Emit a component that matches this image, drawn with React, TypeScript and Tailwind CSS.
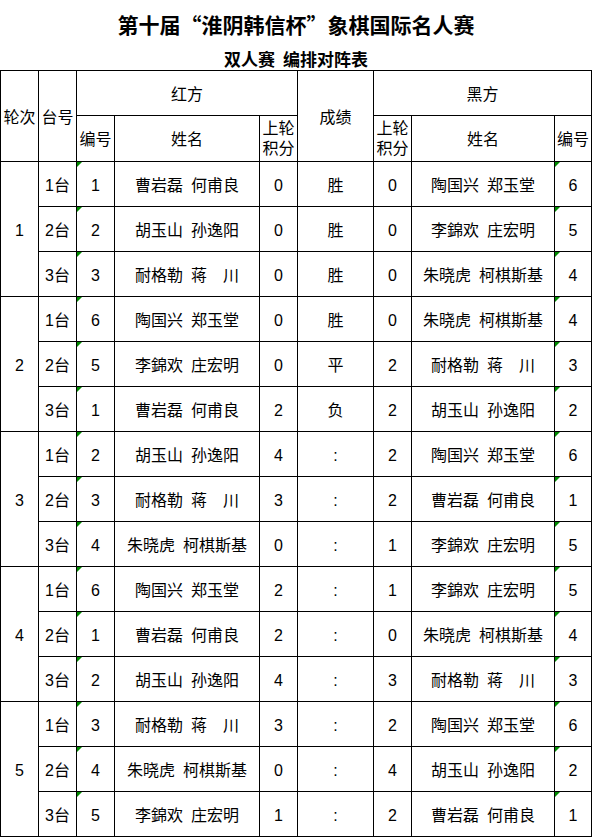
import React from "react";

type Row = [string, string, string, string, string, string, string];

const rounds: Row[][] = [
  [
    ["1", "曹岩磊 何甫良", "0", "胜", "0", "陶国兴 郑玉堂", "6"],
    ["2", "胡玉山 孙逸阳", "0", "胜", "0", "李錦欢 庄宏明", "5"],
    ["3", "耐格勒 蒋　川", "0", "胜", "0", "朱晓虎 柯棋斯基", "4"],
  ],
  [
    ["6", "陶国兴 郑玉堂", "0", "胜", "0", "朱晓虎 柯棋斯基", "4"],
    ["5", "李錦欢 庄宏明", "0", "平", "2", "耐格勒 蒋　川", "3"],
    ["1", "曹岩磊 何甫良", "2", "负", "2", "胡玉山 孙逸阳", "2"],
  ],
  [
    ["2", "胡玉山 孙逸阳", "4", ":", "2", "陶国兴 郑玉堂", "6"],
    ["3", "耐格勒 蒋　川", "3", ":", "2", "曹岩磊 何甫良", "1"],
    ["4", "朱晓虎 柯棋斯基", "0", ":", "1", "李錦欢 庄宏明", "5"],
  ],
  [
    ["6", "陶国兴 郑玉堂", "2", ":", "1", "李錦欢 庄宏明", "5"],
    ["1", "曹岩磊 何甫良", "2", ":", "0", "朱晓虎 柯棋斯基", "4"],
    ["2", "胡玉山 孙逸阳", "4", ":", "3", "耐格勒 蒋　川", "3"],
  ],
  [
    ["3", "耐格勒 蒋　川", "3", ":", "2", "陶国兴 郑玉堂", "6"],
    ["4", "朱晓虎 柯棋斯基", "0", ":", "4", "胡玉山 孙逸阳", "2"],
    ["5", "李錦欢 庄宏明", "1", ":", "2", "曹岩磊 何甫良", "1"],
  ],
];

const cell = "bg-white flex items-center justify-center text-[16px] text-black";
const dcell = cell + " pt-[3px]";

function Tri() {
  return (
    <span className="absolute top-0 left-0 w-0 h-0 border-t-[5px] border-r-[5px] border-t-[#008a00] border-r-transparent" />
  );
}

function Name({ v }: { v: string }) {
  const parts = v.split(" ");
  return (
    <div className={dcell + " gap-[8px] whitespace-pre"}>
      {parts.map((p, i) => (
        <span key={i}>{p}</span>
      ))}
    </div>
  );
}

export default function App() {
  return (
    <div
      className="w-[592px] bg-white text-black"
      style={{ fontFamily: '"Liberation Sans", "Noto Sans CJK SC", sans-serif' }}
    >
      <div className="h-[70px] flex flex-col items-center pt-[10px] font-['Noto_Sans_CJK_SC',sans-serif]">
        <div className="text-[21px] leading-[28px] font-bold">第十届“淮阴韩信杯”象棋国际名人赛</div>
        <div className="mt-[11px] text-[17px] leading-[20px] font-bold flex gap-[8px]">
          <span>双人赛</span>
          <span>编排对阵表</span>
        </div>
      </div>
      <div className="grid grid-cols-[37px_37px_37px_144px_37px_75px_37px_142px_36px] grid-rows-[44px_45px_repeat(15,44px)] gap-px bg-black p-px">
        <div className={cell + " row-span-2 pt-[3px]"}>轮次</div>
        <div className={cell + " row-span-2 pt-[3px]"}>台号</div>
        <div className={cell + " col-span-3 pt-[3px]"}>红方</div>
        <div className={cell + " row-span-2 pt-[3px]"}>成绩</div>
        <div className={cell + " col-span-3 pt-[3px]"}>黑方</div>
        <div className={cell + " pt-[2px]"}>编号</div>
        <div className={cell + " pt-[2px]"}>姓名</div>
        <div className={cell + " flex-col leading-[20px] pt-[1px]"}>
          <span>上轮</span>
          <span>积分</span>
        </div>
        <div className={cell + " flex-col leading-[20px] pt-[1px]"}>
          <span>上轮</span>
          <span>积分</span>
        </div>
        <div className={cell + " pt-[2px]"}>姓名</div>
        <div className={cell + " pt-[2px]"}>编号</div>
        {rounds.map((rows, ri) => (
          <React.Fragment key={ri}>
            {rows.map((r, i) => (
              <React.Fragment key={i}>
                {i === 0 && <div className={dcell + " row-span-3"}>{ri + 1}</div>}
                <div className={dcell}>{i + 1}台</div>
                <div className={dcell + " relative"}>
                  <Tri />
                  {r[0]}
                </div>
                <Name v={r[1]} />
                <div className={dcell}>{r[2]}</div>
                <div className={dcell}>{r[3]}</div>
                <div className={dcell}>{r[4]}</div>
                <Name v={r[5]} />
                <div className={dcell + " relative"}>
                  <Tri />
                  {r[6]}
                </div>
              </React.Fragment>
            ))}
          </React.Fragment>
        ))}
      </div>
    </div>
  );
}
